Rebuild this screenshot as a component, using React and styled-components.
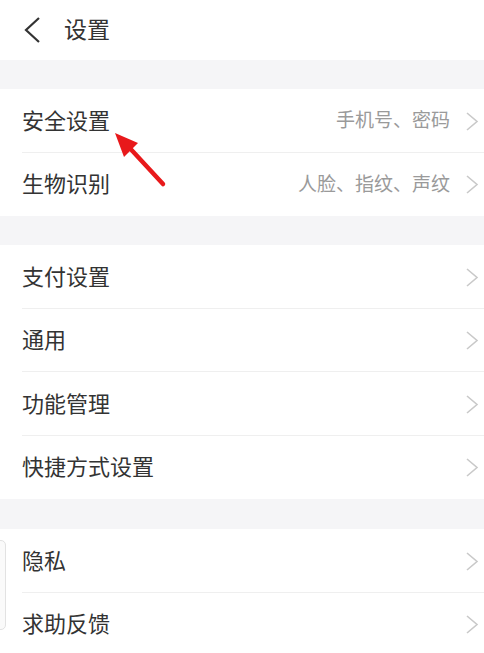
import React from "react";
import styled, {createGlobalStyle} from "styled-components";

const GlobalStyle = createGlobalStyle`
  html, body {
    margin: 0;
    padding: 0;
    background: #f5f5f7;
  }
  body {
    font-family: "Noto Sans CJK SC", "Noto Sans", sans-serif;
  }
`;

const Page = styled.div`
  position: relative;
  width: 484px;
  height: 653px;
  overflow: hidden;
  background: #f5f5f7;
`;

const Header = styled.div`
  height: 60px;
  display: flex;
  align-items: center;
  background: #fff;
  padding-left: 22px;
  box-sizing: border-box;
`;

const Title = styled.div`
  margin-left: 22px;
  font-size: 23px;
  color: #333;
  line-height: 1;
  margin-top: -4px;
`;

const Section = styled.div`
  background: #fff;
  margin-top: ${props => props.gap}px;
`;

const Row = styled.div`
  height: 63.5px;
  display: flex;
  align-items: center;
  padding-left: 22px;
  padding-right: 5px;
  box-sizing: border-box;
  position: relative;
  &:not(:last-child)::after {
    content: "";
    position: absolute;
    left: 22px;
    right: 0;
    bottom: 0;
    height: 1px;
    background: #efefef;
  }
`;

const Label = styled.div`
  flex: 1;
  font-size: 22px;
  color: #333;
  line-height: 1;
  margin-top: -4px;
`;

const Hint = styled.div`
  font-size: 19px;
  color: #9a9a9a;
  line-height: 1;
  margin-right: 15px;
  margin-top: -4px;
`;

const Handle = styled.div`
  position: absolute;
  left: -8px;
  top: 540px;
  width: 12px;
  height: 88px;
  border: 1px solid #e2e2e2;
  border-radius: 5px;
  background: #fafafa;
`;

const Pointer = styled.svg`
  position: absolute;
  left: 108px;
  top: 126px;
`;

const BackIcon = () => (
  <svg width="20" height="28" viewBox="0 0 20 28">
    <path d="M17 2 L4 14 L17 26" fill="none" stroke="#333" strokeWidth="2.2" />
  </svg>
);

const Chevron = () => (
  <svg width="14" height="20" viewBox="0 0 14 20">
    <path d="M2 2 L12 10.5 L2 19" fill="none" stroke="#c9c9c9" strokeWidth="1.6" />
  </svg>
);

const sections = [
  {
    gap: 29,
    items: [
      {label: "安全设置", hint: "手机号、密码"},
      {label: "生物识别", hint: "人脸、指纹、声纹"},
    ],
  },
  {
    gap: 29,
    items: [{label: "支付设置"}, {label: "通用"}, {label: "功能管理"}, {label: "快捷方式设置"}],
  },
  {
    gap: 30,
    items: [{label: "隐私"}, {label: "求助反馈"}],
  },
];

export default () => {
  return (
    <Page>
      <GlobalStyle />
      <Header>
        <BackIcon />
        <Title>设置</Title>
      </Header>
      {sections.map((section, i) => (
        <Section key={i} gap={section.gap}>
          {section.items.map(item => (
            <Row key={item.label}>
              <Label>{item.label}</Label>
              {item.hint && <Hint>{item.hint}</Hint>}
              <Chevron />
            </Row>
          ))}
        </Section>
      ))}
      <Handle />
      <Pointer width="64" height="66" viewBox="0 0 64 66">
        <line x1="18" y1="18" x2="55" y2="58" stroke="#e8191b" strokeWidth="4.5" strokeLinecap="round" />
        <polygon points="7,7 30,17 16,31" fill="#e8191b" />
      </Pointer>
    </Page>
  );
};
